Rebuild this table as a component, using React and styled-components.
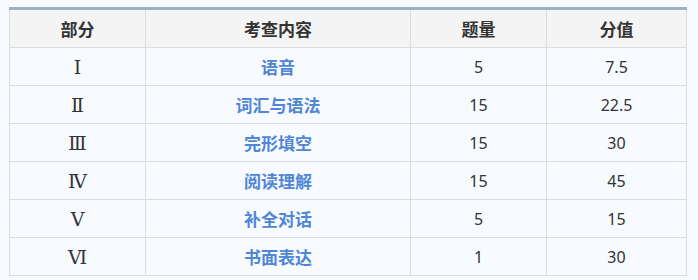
import React from 'react';
import styled, { createGlobalStyle } from 'styled-components';

const GlobalStyle = createGlobalStyle`
  html, body {
    margin: 0;
    padding: 0;
    background: #f7fbff;
  }
  body {
    font-family: "Noto Sans", "Noto Sans CJK SC", sans-serif;
  }
`;

const Page = styled.div`
  padding: 7px 12px 0 9px;
`;

const Table = styled.table`
  width: 677px;
  border-collapse: collapse;
  table-layout: fixed;
  border-top: 3px solid #9bb0c2;
  font-size: 16px;
  color: #333;
`;

const Th = styled.th`
  height: 37px;
  padding: 0;
  background: #f4f4f4;
  border: 1px solid #dcdcdc;
  border-top: none;
  font-family: "Noto Sans CJK SC", sans-serif;
  font-size: 17px;
  font-weight: 700;
  color: #333;
  text-align: center;
`;

const Td = styled.td`
  height: 37px;
  padding: 0;
  border: 1px solid #dcdcdc;
  text-align: center;
  font-family: ${p => (p.$roman ? '"DejaVu Serif", "Noto Serif CJK SC", serif' : '"Noto Sans", sans-serif')};
  font-size: ${p => (p.$roman ? '19px' : '16px')};
  color: #333;
`;

const Topic = styled.td`
  height: 37px;
  padding: 0;
  border: 1px solid #dcdcdc;
  text-align: center;
  font-family: "Noto Sans CJK SC", sans-serif;
  font-size: 17px;
  font-weight: 700;
  color: #4f86d6;
`;

const rows = [
  ['Ⅰ', '语音', '5', '7.5'],
  ['Ⅱ', '词汇与语法', '15', '22.5'],
  ['Ⅲ', '完形填空', '15', '30'],
  ['Ⅳ', '阅读理解', '15', '45'],
  ['Ⅴ', '补全对话', '5', '15'],
  ['Ⅵ', '书面表达', '1', '30'],
];

const App = () => (
  <Page>
    <GlobalStyle />
    <Table>
      <colgroup>
        <col style={{ width: 136 }} />
        <col style={{ width: 265 }} />
        <col style={{ width: 136 }} />
        <col style={{ width: 140 }} />
      </colgroup>
      <thead>
        <tr>
          <Th>部分</Th>
          <Th>考查内容</Th>
          <Th>题量</Th>
          <Th>分值</Th>
        </tr>
      </thead>
      <tbody>
        {rows.map(([part, topic, count, score]) => (
          <tr key={part}>
            <Td $roman>{part}</Td>
            <Topic>{topic}</Topic>
            <Td>{count}</Td>
            <Td>{score}</Td>
          </tr>
        ))}
      </tbody>
    </Table>
  </Page>
);

export default App;
